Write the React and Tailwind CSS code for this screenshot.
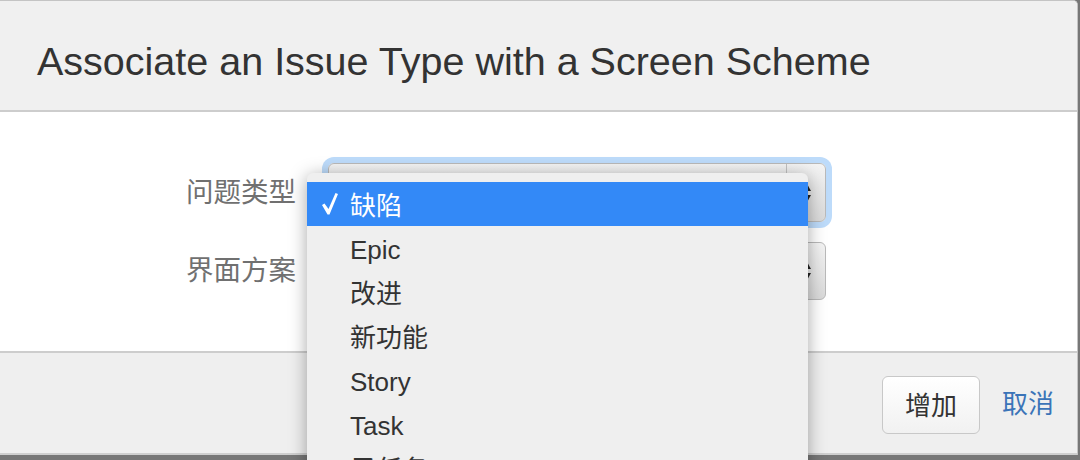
const font = { fontFamily: '"Liberation Sans", "Noto Sans CJK SC", sans-serif' };

const issueTypes = ["缺陷", "Epic", "改进", "新功能", "Story", "Task", "子任务"];

const SelectArrows = () => (
  <svg width="12" height="22" viewBox="0 0 12 22" className="text-[#222]">
    <path d="M6 0 L11 9 L1 9 Z" fill="currentColor" />
    <path d="M1 13 L11 13 L6 22 Z" fill="currentColor" />
  </svg>
);

const FakeSelect = ({ focused, height }) => (
  <div
    className={
      "flex w-[498px] overflow-hidden rounded-[6px] border border-[#b9b9b9] bg-gradient-to-b from-[#f4f4f4] to-[#dadada] " +
      (focused ? "ring-[6px] ring-[#bddbfa]" : "")
    }
    style={{ height }}
  >
    <div className="flex-1" />
    <div className="flex w-[39px] items-center justify-center border-l border-[#c2c2c2]">
      <SelectArrows />
    </div>
  </div>
);

const CheckMark = () => (
  <svg width="16" height="22" viewBox="0 0 16 22">
    <path d="M0 12 L2.5 10.5 L6.5 16 L13.5 0 L16 1 L7.5 21.5 L5.5 21.5 Z" fill="#fff" />
  </svg>
);

export default function App() {
  return (
    <div className="relative h-[460px] w-[1080px] overflow-hidden bg-[#777]" style={font}>
      <div className="flex h-[455px] w-[1078px] flex-col overflow-hidden rounded-tr-[5px] border-t border-r border-[#c4c4c4] bg-white">
        <div className="h-[111px] shrink-0 border-b-2 border-[#cdcdcd] bg-[#f0f0f0] pl-[37px] pt-[41px]">
          <h2 className="text-[39.5px] leading-none text-[#333]">Associate an Issue Type with a Screen Scheme</h2>
        </div>

        <div className="flex h-[239px] shrink-0 flex-col gap-[20px] bg-white pt-[51px]">
          <div className="flex items-center">
            <label className="w-[296px] text-right text-[27.5px] leading-none text-[#707070]">问题类型</label>
            <div className="ml-[32px]">
              <FakeSelect focused height={59} />
            </div>
          </div>
          <div className="flex items-center">
            <label className="w-[296px] text-right text-[27.5px] leading-none text-[#707070]">界面方案</label>
            <div className="ml-[32px]">
              <FakeSelect height={58} />
            </div>
          </div>
        </div>

        <div className="flex flex-1 items-start justify-end gap-[22px] border-t-2 border-b-2 border-t-[#cdcdcd] border-b-[#cfcfcf] bg-[#efefef] pr-[23px] pt-[23px]">
          <button className="h-[58px] w-[98px] rounded-[6px] border border-[#c8c8c8] bg-gradient-to-b from-white to-[#f1f1f1] pt-[2px] text-[26px] text-[#333]">
            增加
          </button>
          <a className="mt-[15px] text-[26px] leading-none text-[#3b74b8]">取消</a>
        </div>
      </div>

      {/* open dropdown of the issue type select */}
      <div className="absolute left-[307px] top-[173px] h-[320px] w-[501px] rounded-t-[6px] bg-[#efefef] pt-[9px] shadow-[0_3px_18px_rgba(0,0,0,0.35)]">
        {issueTypes.map((name, i) => (
          <div
            key={name}
            className={
              "flex h-[44px] items-center text-[26px] leading-none " +
              (i === 0 ? "bg-[#3389f7] text-white" : "text-[#333]")
            }
          >
            <div className="flex w-[43px] justify-center pl-[2px]">{i === 0 && <CheckMark />}</div>
            <span className="pt-[4px]">{name}</span>
          </div>
        ))}
      </div>
    </div>
  );
}
